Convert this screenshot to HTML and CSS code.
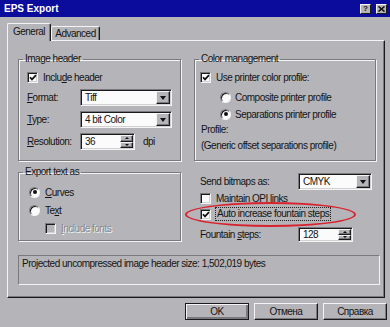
FILE: index.html
```html
<!DOCTYPE html>
<html lang="en">
<head>
    <meta charset="UTF-8">
    <meta name="viewport" content="width=device-width, initial-scale=1.0">
    <title>EPS Export</title>
    <link rel="stylesheet" href="styles.css">
</head>
<body>
    <div class="window">
        <div class="titlebar">
            <span class="title">EPS Export</span>
            <div class="caption-btns">
                <span class="cap-btn help">?</span>
                <span class="cap-btn">
                    <svg width="7" height="6" viewBox="0 0 7 6"><path d="M0.5 0.5 L6.5 5.5 M6.5 0.5 L0.5 5.5" stroke="#111" stroke-width="1.6"/></svg>
                </span>
            </div>
        </div>

        <div class="dialog">
            <div class="tabs">
                <div class="tab active">General</div>
                <div class="tab">Advanced</div>
            </div>

            <div class="panel">
                <div class="columns">
                    <div class="col">
                        <fieldset class="group">
                            <legend>Image header</legend>
                            <div class="group-body image-header">
                                <div class="check-row">
                                    <span class="check"><svg width="8" height="7" viewBox="0 0 8 7"><path d="M1 3.2 L3 5.4 L7 1.2" fill="none" stroke="#111" stroke-width="1.7"/></svg></span>
                                    <span>Inclu<u>d</u>e header</span>
                                </div>
                                <div class="field-row">
                                    <label class="field-label"><u>F</u>ormat:</label>
                                    <div class="combo">
                                        <span class="combo-text">Tiff</span>
                                        <span class="drop-btn"><span class="arrow-down"></span></span>
                                    </div>
                                </div>
                                <div class="field-row">
                                    <label class="field-label"><u>T</u>ype:</label>
                                    <div class="combo">
                                        <span class="combo-text">4 bit Color</span>
                                        <span class="drop-btn"><span class="arrow-down"></span></span>
                                    </div>
                                </div>
                                <div class="field-row">
                                    <label class="field-label"><u>R</u>esolution:</label>
                                    <div class="spin">
                                        <span class="combo-text">36</span>
                                        <span class="spin-btns">
                                            <span class="spin-btn"><span class="arrow-up small"></span></span>
                                            <span class="spin-btn"><span class="arrow-down small"></span></span>
                                        </span>
                                    </div>
                                    <span class="unit">dpi</span>
                                </div>
                            </div>
                        </fieldset>

                        <fieldset class="group export-group">
                            <legend>Export text as</legend>
                            <div class="group-body export-text">
                                <div class="check-row">
                                    <span class="radio on"></span>
                                    <span><u>C</u>urves</span>
                                </div>
                                <div class="check-row">
                                    <span class="radio"></span>
                                    <span>Te<u>x</u>t</span>
                                </div>
                                <div class="check-row indent disabled">
                                    <span class="check"></span>
                                    <span><u>I</u>nclude fonts</span>
                                </div>
                            </div>
                        </fieldset>
                    </div>

                    <div class="col">
                        <fieldset class="group">
                            <legend>Color management</legend>
                            <div class="group-body color-mgmt">
                                <div class="check-row">
                                    <span class="check"><svg width="8" height="7" viewBox="0 0 8 7"><path d="M1 3.2 L3 5.4 L7 1.2" fill="none" stroke="#111" stroke-width="1.7"/></svg></span>
                                    <span>Use printer color profile:</span>
                                </div>
                                <div class="check-row sub composite">
                                    <span class="radio"></span>
                                    <span>Composite printer profile</span>
                                </div>
                                <div class="check-row sub separations">
                                    <span class="radio on"></span>
                                    <span>Separations printer profile</span>
                                </div>
                                <div class="text-line profile-label">Profile:</div>
                                <div class="text-line profile-name">(Generic offset separations profile)</div>
                            </div>
                        </fieldset>

                        <div class="bitmap-opts">
                            <div class="field-row send-row">
                                <label class="field-label wide">Send bitmaps as:</label>
                                <div class="combo cmyk">
                                    <span class="combo-text">CMYK</span>
                                    <span class="drop-btn"><span class="arrow-down"></span></span>
                                </div>
                            </div>
                            <div class="check-row opi-row">
                                <span class="check"></span>
                                <span>Maintain OPI links</span>
                            </div>
                            <div class="check-row auto-row">
                                <span class="check"><svg width="8" height="7" viewBox="0 0 8 7"><path d="M1 3.2 L3 5.4 L7 1.2" fill="none" stroke="#111" stroke-width="1.7"/></svg></span>
                                <span class="focus">Auto increase fountain steps</span>
                                <span class="highlight"></span>
                            </div>
                            <div class="field-row fountain-row">
                                <label class="field-label wide">Fountain <u>s</u>teps:</label>
                                <div class="spin small-spin">
                                    <span class="combo-text">128</span>
                                    <span class="spin-btns">
                                        <span class="spin-btn"><span class="arrow-up small"></span></span>
                                        <span class="spin-btn"><span class="arrow-down small"></span></span>
                                    </span>
                                </div>
                            </div>
                        </div>
                    </div>
                </div>

                <div class="status-box">Projected uncompressed image header size: 1,502,019 bytes</div>
            </div>

            <div class="buttons">
                <button class="btn default">OK</button>
                <button class="btn">Отмена</button>
                <button class="btn">Справка</button>
            </div>
        </div>
    </div>
</body>
</html>
```

FILE: styles.css
```css
body {
    margin: 0;
    background: #b5b4b9;
    font-family: "Liberation Sans", Arial, sans-serif;
    font-size: 10px;
    letter-spacing: -0.5px;
    color: #141414;
}
.window {
    width: 390px;
    height: 327px;
    background: #b5b4b9;
    overflow: hidden;
}
.titlebar {
    height: 17px;
    background: #0b0c9c;
    display: flex;
    align-items: center;
    justify-content: space-between;
    padding: 0 3px 0 4px;
}
.title {
    color: #fff;
    font-weight: bold;
    font-size: 10px;
    letter-spacing: 0;
}
.caption-btns {
    display: flex;
    gap: 5px;
}
.cap-btn {
    width: 11px;
    height: 10px;
    box-sizing: border-box;
    background: #b5b4b9;
    border: 1px solid;
    border-color: #f4f4f4 #1a1a1a #1a1a1a #f4f4f4;
    display: flex;
    align-items: center;
    justify-content: center;
}
.cap-btn.help {
    font-weight: bold;
    font-size: 8px;
    line-height: 8px;
    letter-spacing: 0;
}
.dialog {
    padding: 6px 0 0 7px;
}
.tabs {
    display: flex;
    align-items: flex-end;
    height: 17px;
    position: relative;
    z-index: 1;
}
.tab {
    box-sizing: border-box;
    height: 14px;
    width: 49px;
    border: 1px solid;
    border-color: #f4f4f4 #1a1a1a transparent #f4f4f4;
    border-bottom: none;
    border-radius: 2px 2px 0 0;
    box-shadow: inset -1px 0 0 #7a7a7e;
    background: #b5b4b9;
    display: flex;
    align-items: center;
    justify-content: center;
    padding-bottom: 1px;
}
.tab.active {
    width: 44px;
    height: 18px;
    margin-bottom: -1px;
    padding-bottom: 3px;
}
.panel {
    box-sizing: border-box;
    width: 378px;
    height: 258px;
    border: 1px solid;
    border-color: #f4f4f4 #1a1a1a #1a1a1a #f4f4f4;
    box-shadow: inset -1px -1px 0 #7a7a7e;
    padding: 12px 8px 11px 10px;
}
.columns {
    display: grid;
    grid-template-columns: 163px 182px;
    column-gap: 13px;
}
.group {
    margin: 0;
    padding: 0;
    min-width: 0;
    border: 1px solid #7a7a7e;
    box-shadow: 1px 1px 0 #f4f4f4, inset 1px 1px 0 #f4f4f4;
}
.group legend {
    margin-left: 4px;
    padding: 0 2px;
    line-height: 12px;
    height: 12px;
}
.group-body {
    display: flex;
    flex-direction: column;
}
.image-header {
    padding: 5px 0 10px 8px;
    gap: 5px;
}
.export-group {
    margin-top: 5px;
}
.export-text {
    padding: 7px 0 5px 10px;
    gap: 4px;
}
.color-mgmt {
    padding: 5px 0 8px 5px;
}
.check-row {
    display: flex;
    align-items: center;
    height: 14px;
    gap: 5px;
    white-space: nowrap;
}
.check-row.indent {
    margin-left: 16px;
}
.check-row.sub {
    margin-left: 20px;
    gap: 4px;
}
.composite {
    margin-top: 6px;
}
.separations {
    margin-top: 3px;
}
.text-line {
    line-height: 12px;
    height: 12px;
    margin-left: 1px;
    white-space: nowrap;
}
.profile-label {
    margin-top: 3px;
}
.profile-name {
    margin-top: 4px;
}
.disabled {
    color: #8a8a8e;
    text-shadow: 1px 1px 0 #f4f4f4;
}
.check {
    box-sizing: border-box;
    width: 11px;
    height: 11px;
    flex: none;
    background: #fbfbfb;
    border: 1px solid;
    border-color: #7a7a7e #f4f4f4 #f4f4f4 #7a7a7e;
    box-shadow: inset 1px 1px 0 #1a1a1a, inset -1px -1px 0 #d2d2d5;
    display: flex;
    align-items: center;
    justify-content: center;
}
.disabled .check {
    background: #b5b4b9;
}
.radio {
    box-sizing: border-box;
    width: 11px;
    height: 11px;
    flex: none;
    border-radius: 50%;
    background: #fbfbfb;
    border: 1px solid;
    border-color: #7a7a7e #f4f4f4 #f4f4f4 #7a7a7e;
    box-shadow: inset 1px 1px 0 #1a1a1a;
    display: flex;
    align-items: center;
    justify-content: center;
}
.radio.on::after {
    content: "";
    width: 4px;
    height: 4px;
    border-radius: 50%;
    background: #111;
}
.field-row {
    display: flex;
    align-items: center;
    height: 17px;
    white-space: nowrap;
}
.field-label {
    width: 53px;
    flex: none;
}
.field-label.wide {
    width: 98px;
}
.combo, .spin {
    box-sizing: border-box;
    height: 17px;
    width: 92px;
    background: #fbfbfb;
    border: 1px solid;
    border-color: #7a7a7e #f4f4f4 #f4f4f4 #7a7a7e;
    box-shadow: inset 1px 1px 0 #1a1a1a, inset -1px -1px 0 #d2d2d5;
    padding: 1px;
    display: flex;
    align-items: center;
}
.combo-text {
    flex: 1;
    padding-left: 3px;
}
.drop-btn, .spin-btn {
    box-sizing: border-box;
    background: #b5b4b9;
    border: 1px solid;
    border-color: #f4f4f4 #1a1a1a #1a1a1a #f4f4f4;
    box-shadow: inset -1px -1px 0 #7a7a7e;
    display: flex;
    align-items: center;
    justify-content: center;
}
.drop-btn {
    width: 14px;
    height: 13px;
}
.arrow-down {
    width: 0;
    height: 0;
    border-left: 3.5px solid transparent;
    border-right: 3.5px solid transparent;
    border-top: 4px solid #111;
}
.arrow-up {
    width: 0;
    height: 0;
    border-left: 3.5px solid transparent;
    border-right: 3.5px solid transparent;
    border-bottom: 4px solid #111;
}
.arrow-down.small {
    border-left-width: 2px;
    border-right-width: 2px;
    border-top-width: 2px;
}
.arrow-up.small {
    border-left-width: 2px;
    border-right-width: 2px;
    border-bottom-width: 2px;
}
.spin {
    width: 55px;
}
.spin-btns {
    display: flex;
    flex-direction: column;
    width: 13px;
    height: 13px;
}
.spin-btn {
    flex: 1;
}
.unit {
    margin-left: 8px;
}
.cmyk {
    width: 74px;
}
.bitmap-opts {
    padding-left: 6px;
    display: flex;
    flex-direction: column;
}
.send-row {
    margin-top: 12px;
}
.opi-row {
    margin-top: 1px;
}
.auto-row {
    margin-top: 2px;
    position: relative;
}
.focus {
    outline: 1px dotted #222;
    padding: 0 1px;
    line-height: 12px;
}
.highlight {
    position: absolute;
    left: -15px;
    top: -5px;
    width: 171px;
    height: 25px;
    box-sizing: border-box;
    border: 2px solid #d8222e;
    border-radius: 50%;
}
.fountain-row {
    margin-top: 6px;
    height: 15px;
}
.small-spin {
    height: 15px;
}
.small-spin .spin-btns {
    height: 11px;
}
.status-box {
    box-sizing: border-box;
    width: 362px;
    height: 30px;
    margin-top: 13px;
    border: 1px solid;
    border-color: #7a7a7e #f4f4f4 #f4f4f4 #7a7a7e;
    padding: 2px 3px;
    line-height: 12px;
}
.buttons {
    display: flex;
    justify-content: flex-end;
    gap: 5px;
    padding-right: 3px;
    margin-top: 5px;
}
.btn {
    box-sizing: border-box;
    width: 64px;
    height: 17px;
    padding: 0;
    font-family: "Liberation Sans", Arial, sans-serif;
    font-size: 10px;
    letter-spacing: -0.5px;
    color: #141414;
    background: #b5b4b9;
    border: 1px solid;
    border-color: #f4f4f4 #1a1a1a #1a1a1a #f4f4f4;
    box-shadow: inset -1px -1px 0 #7a7a7e;
}
.btn.default {
    border-color: #1a1a1a;
    box-shadow: inset 1px 1px 0 #f4f4f4, inset -2px -2px 0 #7a7a7e;
}
```
